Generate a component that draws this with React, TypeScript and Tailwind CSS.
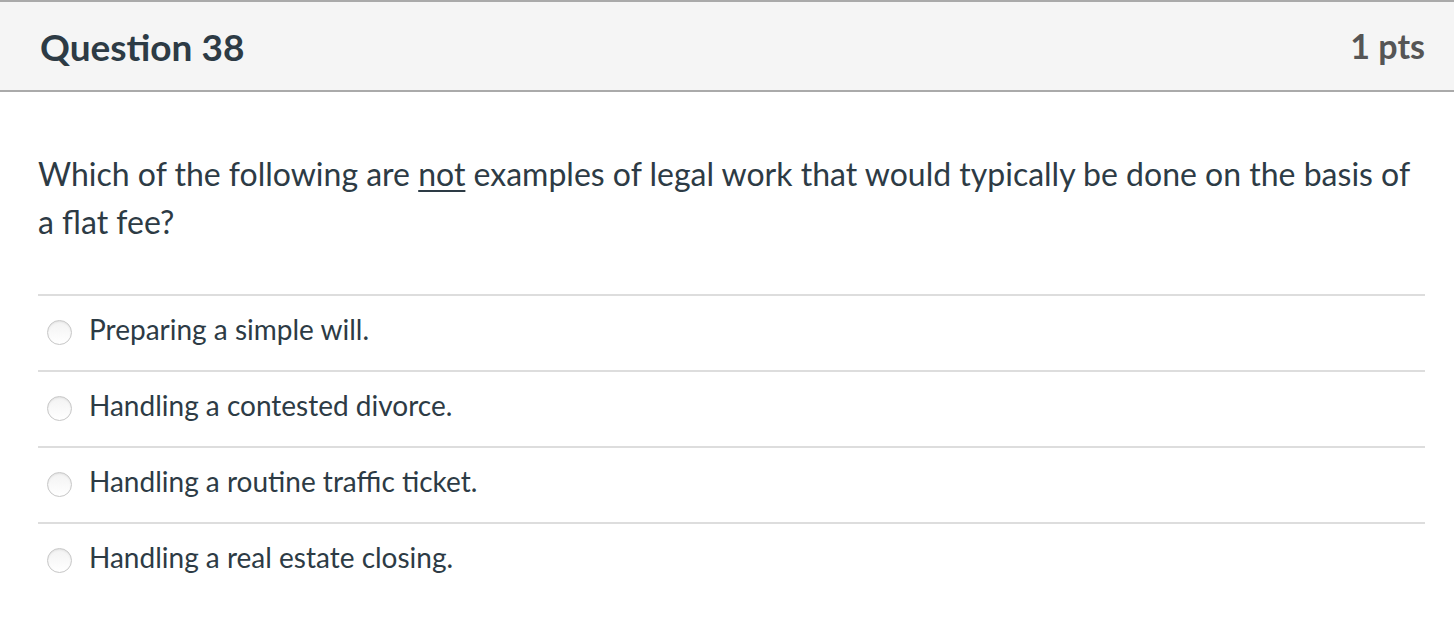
const options = [
  "Preparing a simple will.",
  "Handling a contested divorce.",
  "Handling a routine traffic ticket.",
  "Handling a real estate closing.",
];

export default function App() {
  return (
    <div className="min-h-[632px] bg-white font-['Lato',sans-serif] text-[#2d3b45]">
      <div className="flex h-[92px] items-center justify-between border-t-2 border-b-2 border-[#aaaaaa] bg-[#f5f5f5] pl-[40px] pr-[29px]">
        <h2 className="text-[37px] font-bold leading-none">Question 38</h2>
        <span className="text-[34px] font-bold leading-none text-[#555555]">1 pts</span>
      </div>

      <div className="pl-[38px] pr-[29px]">
        <p className="mt-[58px] text-[32px] leading-[48px]">
          Which of the following are <u className="decoration-[2px] underline-offset-[4px]">not</u> examples of legal work that would typically be done on the basis of a flat fee?
        </p>

        <div className="mt-[48px]">
          {options.map((o) => (
            <label key={o} className="flex h-[76px] items-center border-t-2 border-[#dddddd]">
              <span className="mb-[2px] ml-[9px] h-[25px] w-[25px] shrink-0 rounded-full border border-[#c7c7c7] bg-gradient-to-b from-[#f3f3f3] to-white shadow-[inset_0_1px_2px_rgba(0,0,0,0.08)]" />
              <span className="mb-[8px] ml-[17px] text-[28px] leading-[34px]">{o}</span>
            </label>
          ))}
        </div>
      </div>
    </div>
  );
}
